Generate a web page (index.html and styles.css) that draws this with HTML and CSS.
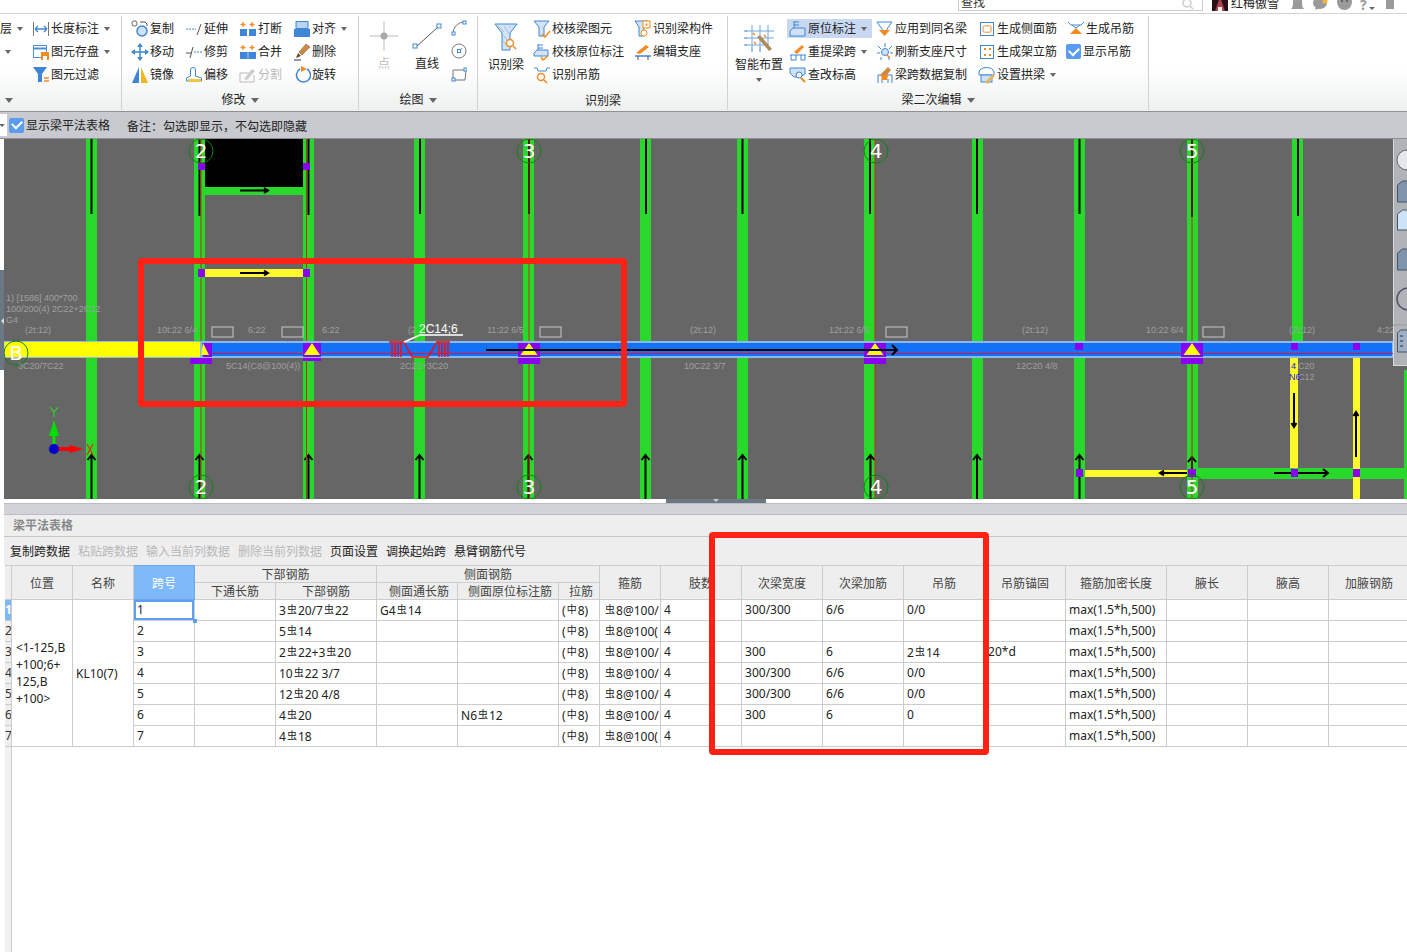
FILE: index.html
```html
<!DOCTYPE html>
<html lang="zh-CN">
<head>
<meta charset="utf-8">
<title>梁平法表格</title>
<link rel="stylesheet" href="styles.css">
</head>
<body>
<div class="app">

  <header class="topbar">
    <div class="search"><span>查找</span>
      <svg class="search-ic" viewBox="0 0 12 12"><circle cx="5" cy="5" r="4" fill="none" stroke="#ccc" stroke-width="1.5"/><path d="M8 8l3 3" stroke="#ccc" stroke-width="1.5"/></svg>
    </div>
    <svg class="avatar" viewBox="0 0 16 16"><rect width="16" height="16" fill="#2a1014"/><path d="M3 16L8 2l5 14z" fill="#a8434f"/><path d="M6 12h4v4H6z" fill="#eee"/></svg>
    <span class="user">红梅傲雪</span>
    <svg class="top-ic t-bell" viewBox="0 0 13 16"><path d="M0 15c2-2 2-4 2-8s2-7 4.500-7 4.500 3 4.500 7 0 6 2 8z" fill="#9a9a9a"/></svg>
    <svg class="top-ic t-chat" viewBox="0 0 15 16"><ellipse cx="7" cy="9" rx="7" ry="6" fill="#9a9a9a"/><path d="M3 13l-1 3 5-2z" fill="#9a9a9a"/><circle cx="12" cy="7" r="2.500" fill="#f5b53a"/></svg>
    <svg class="top-ic t-mask" viewBox="0 0 15 16"><ellipse cx="7.500" cy="8" rx="7.500" ry="8" fill="#9a9a9a"/><circle cx="5" cy="7" r="1.200" fill="#666"/><circle cx="10" cy="7" r="1.200" fill="#666"/></svg>
    <span class="help">?<i class="caret caret-s"></i></span>
    <svg class="top-ic t-shirt" viewBox="0 0 14 16"><path d="M0 2l4-2h6l4 2v4h-3v9H3V6H0z" fill="#9a9a9a"/></svg>
  </header>

  <section class="ribbon">
    <div class="group g0">
      <div class="g-body">
        <div class="g0-left">
          <div class="tool"><span>层</span><i class="caret g0-caret"></i></div>
          <div class="tool"><i class="caret g0-solo"></i></div>
        </div>
        <div class="stack">
          <div class="tool"><svg class="ic" viewBox="0 0 18 18"><path d="M1.500 2v14M16.500 2v14" stroke="#777"/><path d="M3 9h12M3 9l3-3M3 9l3 3M15 9l-3-3M15 9l-3 3" stroke="#3f86d6" stroke-width="1.3" fill="none"/></svg><span>长度标注</span><i class="caret"></i></div>
          <div class="tool"><svg class="ic" viewBox="0 0 18 18"><rect x="1.500" y="2.500" width="13" height="12" fill="#fff" stroke="#4a90d9"/><path d="M1.500 5.500h13" stroke="#4a90d9" stroke-width="2"/><rect x="9" y="9" width="8" height="8" fill="#f58a1f"/><rect x="11" y="13" width="4" height="4" fill="#fff"/></svg><span>图元存盘</span><i class="caret"></i></div>
          <div class="tool"><svg class="ic" viewBox="0 0 18 18"><path d="M1 1h14L10 8v8H6V8z" fill="#3f86d6"/><path d="M12 12h5M12 15h5" stroke="#f58a1f" stroke-width="1.4"/></svg><span>图元过滤</span></div>
        </div>
      </div>
      <div class="g-label g0-label"><i class="caret big-caret"></i></div>
    </div>

    <div class="group g1">
      <div class="g-body g1-grid">
        <div class="tool"><svg class="ic" viewBox="0 0 18 18"><rect x="1" y="1" width="5" height="5" rx="2" fill="none" stroke="#666"/><circle cx="11" cy="11" r="5" fill="#cfe2f5" stroke="#3f86d6" stroke-width="1.5"/><path d="M9 2h5l2 2v2" fill="none" stroke="#555"/></svg><span>复制</span></div>
        <div class="tool"><svg class="ic" viewBox="0 0 18 18"><path d="M1 9h10" stroke="#3f86d6" stroke-dasharray="2 1"/><path d="M12 15l4-11" stroke="#555"/></svg><span>延伸</span></div>
        <div class="tool"><svg class="ic" viewBox="0 0 18 18"><path d="M4 2v5M1.500 4.500h5M13 2v5M10.500 4.500h5" stroke="#f58a1f" stroke-width="1.300"/><rect x="1" y="9" width="7" height="7" fill="#3f86d6"/><rect x="10" y="9" width="7" height="7" fill="#3f86d6"/></svg><span>打断</span></div>
        <div class="tool"><svg class="ic" viewBox="0 0 18 18"><rect x="3" y="1.500" width="12" height="7" fill="#b9d3f0" stroke="#3f86d6"/><rect x="1" y="9" width="16" height="8" fill="#3f86d6"/></svg><span>对齐</span><i class="caret"></i></div>

        <div class="tool"><svg class="ic" viewBox="0 0 18 18"><path d="M9 3v12M3 9h12" stroke="#3f86d6" stroke-width="1.500"/><path d="M9 0l3 4H6zM9 18l3-4H6zM0 9l4-3v6zM18 9l-4-3v6z" fill="#3f86d6"/></svg><span>移动</span></div>
        <div class="tool"><svg class="ic" viewBox="0 0 18 18"><path d="M1 10h5" stroke="#555"/><path d="M9 9h8" stroke="#3f86d6" stroke-dasharray="2 1"/><path d="M5 15l3-11" stroke="#555"/></svg><span>修剪</span></div>
        <div class="tool"><svg class="ic" viewBox="0 0 18 18"><path d="M4 2v5M1.500 4.500h5M13 2v5M10.500 4.500h5" stroke="#f58a1f" stroke-width="1.300"/><rect x="1" y="9" width="16" height="7" fill="#3f86d6"/><path d="M9 9v7" stroke="#a9cdf2"/></svg><span>合并</span></div>
        <div class="tool"><svg class="ic" viewBox="0 0 18 18"><path d="M1 17h7" stroke="#333"/><path d="M3 15l2-5 3 3z" fill="#6b4a2a"/><path d="M6 9l7-8 4 3-8 8z" fill="#c88a45" stroke="#7a5230" stroke-width=".5"/></svg><span>删除</span></div>

        <div class="tool"><svg class="ic" viewBox="0 0 18 18"><path d="M8 1v16H1z" fill="#3f86d6"/><path d="M10 1v16h7z" fill="#f5b51f"/></svg><span>镜像</span></div>
        <div class="tool"><svg class="ic" viewBox="0 0 18 18"><path d="M1.500 15v-3l4-2V4a2.500 2.500 0 015 0v6l6 2v3z" fill="#fff" stroke="#3f86d6"/><path d="M3 13h13v3H3z" fill="#f5c34a"/></svg><span>偏移</span></div>
        <div class="tool off"><svg class="ic" viewBox="0 0 18 18"><path d="M1 7h11M1 7v9h14V9" fill="none" stroke="#bbb"/><path d="M5 13l8-10 3 2-8 9z" fill="#ccc"/></svg><span>分割</span></div>
        <div class="tool"><svg class="ic" viewBox="0 0 18 18"><path d="M7 3a7 7 0 107-0" fill="none" stroke="#3f86d6" stroke-width="1.500"/><path d="M8 0l6 3-6 3z" fill="#f58a1f"/></svg><span>旋转</span></div>
      </div>
      <div class="g-label">修改<i class="caret big-caret"></i></div>
    </div>

    <div class="group g2">
      <div class="g-body g2-row">
        <div class="big pt off">
          <svg class="ic-pt" viewBox="0 0 28 30"><path d="M14 0v30M0 15h28" stroke="#bbb"/><circle cx="14" cy="15" r="3.500" fill="#aaa"/></svg>
          <span>点</span>
        </div>
        <div class="big ln">
          <svg class="ic-ln" viewBox="0 0 30 28"><path d="M4 24L26 4" stroke="#555"/><rect x="1" y="21" width="4" height="4" fill="#fff" stroke="#3f86d6"/><rect x="25" y="1" width="4" height="4" fill="#fff" stroke="#3f86d6"/></svg>
          <span>直线</span>
        </div>
        <div class="mini-col">
          <svg class="ic-mini" viewBox="0 0 16 16"><path d="M2 14C2 7 7 2 14 2" fill="none" stroke="#777"/><rect x="1" y="12" width="3" height="3" fill="#fff" stroke="#3f86d6"/><rect x="12" y="1" width="3" height="3" fill="#fff" stroke="#3f86d6"/></svg>
          <svg class="ic-mini" viewBox="0 0 16 16"><circle cx="8" cy="8" r="7" fill="none" stroke="#777"/><path d="M8 8l3-3" stroke="#777"/><rect x="6.500" y="6.500" width="3" height="3" fill="#fff" stroke="#3f86d6"/></svg>
          <svg class="ic-mini" viewBox="0 0 16 16"><path d="M2 4h13l-1 10H2z" fill="none" stroke="#777"/><rect x="13" y="2" width="3" height="3" fill="#fff" stroke="#3f86d6"/><rect x="1" y="12" width="3" height="3" fill="#fff" stroke="#3f86d6"/></svg>
        </div>
      </div>
      <div class="g-label">绘图<i class="caret big-caret"></i></div>
    </div>

    <div class="group g3">
      <div class="g-body g3-row">
        <div class="big rec">
          <svg class="ic-rec" viewBox="0 0 24 28"><path d="M1 1h22L16 10v17H8V10z" fill="#d5e4f5" stroke="#3f86d6"/><path d="M4 3l6 6M10 3l5 8M15 3l1 2M9 12l6 7M9 18l5 6" stroke="#9cc0e8"/><circle cx="16" cy="20" r="3.500" fill="#fff" stroke="#f58a1f" stroke-width="1.400"/><path d="M19 23l3 3" stroke="#f58a1f" stroke-width="1.500"/></svg>
          <span>识别梁</span>
        </div>
        <div class="stack s-a">
          <div class="tool"><svg class="ic" viewBox="0 0 18 18"><path d="M1 1h15l-5 6v9H6V7z" fill="#d5e4f5" stroke="#3f86d6"/><path d="M9 14l3 3 5-6" fill="none" stroke="#f58a1f" stroke-width="1.500"/></svg><span>校核梁图元</span></div>
          <div class="tool"><svg class="ic" viewBox="0 0 18 18"><path d="M5 1v7M5 2h5M5 5h5" stroke="#3f86d6"/><path d="M1 10l3-3h11v6H1z" fill="#d5e4f5" stroke="#3f86d6"/><path d="M8 14l2 3 5-4" fill="none" stroke="#f58a1f" stroke-width="1.500"/></svg><span>校核原位标注</span></div>
          <div class="tool"><svg class="ic" viewBox="0 0 18 18"><path d="M1 2h3l1 3h8l1-3h3" fill="none" stroke="#3f86d6"/><circle cx="8" cy="11" r="3.500" fill="#fff" stroke="#f58a1f" stroke-width="1.400"/><path d="M11 14l3 3" stroke="#f58a1f" stroke-width="1.500"/></svg><span>识别吊筋</span></div>
        </div>
        <div class="stack s-b">
          <div class="tool"><svg class="ic" viewBox="0 0 18 18"><path d="M1 1h13l-4 6v9H5V7z" fill="#d5e4f5" stroke="#3f86d6"/><rect x="9" y="1" width="7" height="7" fill="#fff" stroke="#f58a1f"/><rect x="11.500" y="3.500" width="2" height="2" fill="#f58a1f"/><circle cx="10" cy="13" r="3" fill="#fff" stroke="#f58a1f"/></svg><span>识别梁构件</span></div>
          <div class="tool"><svg class="ic" viewBox="0 0 18 18"><path d="M2 10l10-8 3 2-9 7z" fill="#f58a1f"/><path d="M1 13h16" stroke="#3f86d6" stroke-width="1.500"/><path d="M4 13v4M14 13v4" stroke="#555"/></svg><span>编辑支座</span></div>
        </div>
      </div>
      <div class="g-label">识别梁</div>
    </div>

    <div class="group g4">
      <div class="g-body g4-row">
        <div class="big smart">
          <svg class="ic-smart" viewBox="0 0 32 34"><path d="M9 1v22M17 1v22M25 1v22M3 7h28M3 14h28M3 21h20" stroke="#6ea6e0"/><path d="M1 7h3M1 14h3M1 21h3M9 23v5M17 23v5" stroke="#3f86d6"/><path d="M14 13l12 14 3-2-12-14z" fill="#b08a5a"/><path d="M10 9l2 2M21 11l2 2M11 18l2 2" stroke="#f58a1f" stroke-width="1.500"/></svg>
          <span>智能布置</span>
          <i class="caret smart-caret"></i>
        </div>
        <div class="stack s-c">
          <div class="tool on"><svg class="ic" viewBox="0 0 18 18"><path d="M5 1v7M5 2h5M5 5h5" stroke="#3f86d6"/><path d="M1 11l3-3h12v8H1z" fill="#cfe2f5" stroke="#3f86d6"/></svg><span>原位标注</span><i class="caret"></i></div>
          <div class="tool"><svg class="ic" viewBox="0 0 18 18"><path d="M5 9l8-7 2 2-7 7z" fill="#f58a1f"/><path d="M1 12h16M2 12v5M7 12v5M12 12v5M16 12v5M2 17h5M12 17h4" stroke="#3f86d6" fill="none"/></svg><span>重提梁跨</span><i class="caret"></i></div>
          <div class="tool"><svg class="ic" viewBox="0 0 18 18"><path d="M1 2h15v6l-5 3H5L1 7z" fill="#cfe2f5" stroke="#3f86d6"/><circle cx="10" cy="9" r="3" fill="#fff" stroke="#3f86d6"/><path d="M12 12l4 4" stroke="#f58a1f" stroke-width="2"/></svg><span>查改标高</span></div>
        </div>
        <div class="stack s-d">
          <div class="tool"><svg class="ic" viewBox="0 0 18 18"><path d="M1 2h15l-5 7v3H6V9z" fill="#fff" stroke="#3f86d6"/><path d="M3 10h11l-5.500 6z" fill="#f58a1f"/></svg><span>应用到同名梁</span></div>
          <div class="tool"><svg class="ic" viewBox="0 0 18 18"><path d="M9 0v4M2 3l3 3M16 3l-3 3M1 10h3M14 10h3M5 17v-3M13 17v-3" stroke="#3f86d6"/><circle cx="9" cy="9" r="3.500" fill="#cfe2f5" stroke="#3f86d6"/><path d="M11 12l3 3" stroke="#f58a1f" stroke-width="1.500"/></svg><span>刷新支座尺寸</span></div>
          <div class="tool"><svg class="ic" viewBox="0 0 18 18"><path d="M2 17V9h14v8M6 17v-4M12 17v-4" fill="none" stroke="#3f86d6"/><path d="M4 9l8-8 3 3-5 6z" fill="#c88a45"/><path d="M5 9h7l-1 5H6z" fill="#f58a1f"/></svg><span>梁跨数据复制</span></div>
        </div>
        <div class="stack s-e">
          <div class="tool"><svg class="ic" viewBox="0 0 18 18"><rect x="2.500" y="2.500" width="13" height="13" fill="#fff" stroke="#3f86d6"/><path d="M5 6.500c0-1 8-1 8 0M5 11.500c0 1 8 1 8 0M5 6.500v5M13 6.500v5" fill="none" stroke="#f58a1f"/></svg><span>生成侧面筋</span></div>
          <div class="tool"><svg class="ic" viewBox="0 0 18 18"><rect x="2.500" y="2.500" width="13" height="13" fill="#fff" stroke="#3f86d6"/><path d="M6 5h2v2H6zM11 5h2v2h-2zM6 11h2v2H6zM11 11h2v2h-2z" fill="#f58a1f"/></svg><span>生成架立筋</span></div>
          <div class="tool"><svg class="ic" viewBox="0 0 18 18"><path d="M1 6c1-6 14-6 15 0v3H1z" fill="#fff" stroke="#3f86d6"/><rect x="3" y="9" width="11" height="7" fill="#cfe2f5" stroke="#3f86d6"/><path d="M7 16l8-8 2 2-8 8z" fill="#e8b45a"/></svg><span>设置拱梁</span><i class="caret"></i></div>
        </div>
        <div class="stack s-f">
          <div class="tool"><svg class="ic" viewBox="0 0 18 18"><path d="M1 2l3 3h10l3-3" fill="none" stroke="#3f86d6"/><path d="M3 14L9 8l6 6z" fill="#f58a1f"/><path d="M5 5l4 3 4-3" fill="none" stroke="#3f86d6"/></svg><span>生成吊筋</span></div>
          <label class="tool chk"><span class="check"></span><span>显示吊筋</span></label>
        </div>
      </div>
      <div class="g-label">梁二次编辑<i class="caret big-caret"></i></div>
    </div>
  </section>

  <section class="optbar">
    <span class="drop"><i class="caret caret-s"></i></span>
    <span class="check"></span>
    <span class="opt-t">显示梁平法表格</span>
    <span class="opt-n">备注：勾选即显示，不勾选即隐藏</span>
  </section>

  <section class="view">
    <div class="gutter"><div class="handle"><i></i></div></div>
    <div class="canvas">
      <svg class="cad" viewBox="4 139 1403 360">
        <g class="green">
          <rect x="86" y="139" width="11" height="360"/><rect x="194" y="139" width="11" height="360"/>
          <rect x="303" y="139" width="11" height="360"/><rect x="414" y="139" width="11" height="360"/>
          <rect x="523" y="139" width="11" height="360"/><rect x="640" y="139" width="11" height="360"/>
          <rect x="737" y="139" width="11" height="360"/><rect x="864" y="139" width="11" height="360"/>
          <rect x="972" y="139" width="11" height="360"/><rect x="1074" y="139" width="11" height="360"/>
          <rect x="1187" y="139" width="11" height="360"/><rect x="1292" y="139" width="11" height="203"/>
          <rect x="1404" y="370" width="3" height="129"/>
          <rect x="205" y="187" width="98" height="8"/><rect x="1198" y="468" width="209" height="11"/>
        </g>
        <rect x="205" y="139" width="98" height="48" fill="#000"/>
        <g class="yellow">
          <rect x="205" y="269" width="98" height="8"/><rect x="1290" y="358" width="8" height="110"/>
          <rect x="1353" y="358" width="7" height="141"/><rect x="1085" y="470" width="102" height="7"/>
        </g>
        <g class="blk">
          <path d="M91.500 139v75M199.500 139v77M308.500 139v76M420 139v75M529 139v75M646 139v75M742.500 139v75M870 139v75M977 139v75M1079.500 139v75M1192 139v78M1298 139v77"/>
          <path d="M91.500 499v-44M87.500 460l4-5 4 5M199.500 499v-44M195.500 460l4-5 4 5M308.500 499v-44M304.500 460l4-5 4 5M419.500 499v-44M415.500 460l4-5 4 5M528.500 499v-44M524.500 460l4-5 4 5M645.500 499v-44M641.500 460l4-5 4 5M742.500 499v-44M738.500 460l4-5 4 5M870.500 499v-44M866.500 460l4-5 4 5M977 499v-44M973 460l4-5 4 5M1079.500 499v-44M1075.500 460l4-5 4 5M1192 469v-12M1188 462l4-5 4 5"/>
          <path d="M240 190.500h27M264 188l4 2.500-4 2.500M240 273h27M264 270.500l4 2.500-4 2.500"/>
          <path d="M1160 473h27M1164 470.500l-4 2.500 4 2.500M1274 473h53M1323 469l5 4-5 4M1294 393v33M1291.500 423l2.500 4 2.500-4M1356 457v-44M1353.500 416l2.500-4 2.500 4"/>
        </g>
        <path class="rd" d="M201 139v360M306.500 139v360M529 139v360M875 139v360M1192 139v360"/>
        <g class="purple">
          <rect x="198" y="163" width="7" height="7"/><rect x="303" y="163" width="7" height="7"/>
          <rect x="198" y="269" width="7" height="8"/><rect x="303" y="269" width="7" height="8"/>
          <rect x="1076" y="469" width="7" height="8"/><rect x="1188" y="469" width="8" height="8"/>
          <rect x="1291" y="469" width="7" height="8"/><rect x="1353" y="469" width="7" height="8"/>
        </g>
        <rect class="beam-y" x="4" y="341.500" width="200" height="16"/>
        <rect class="beam-b" x="201" y="342" width="1192" height="15"/>
        <path class="beam-r" d="M201 353.500h1192"/>
        <g class="purple">
          <rect x="203" y="343" width="9" height="14"/><rect x="190" y="358" width="22" height="6"/>
          <rect x="303" y="343" width="18" height="14"/><rect x="303" y="358" width="18" height="3"/>
          <rect x="518" y="343" width="22" height="14"/><rect x="518" y="358" width="22" height="6"/>
          <rect x="864" y="343" width="22" height="14"/><rect x="864" y="358" width="22" height="6"/>
          <rect x="1181" y="343" width="22" height="14"/><rect x="1181" y="358" width="22" height="6"/>
          <rect x="1075" y="343" width="8" height="7"/><rect x="1291" y="343" width="7" height="7"/><rect x="1353" y="343" width="7" height="7"/>
        </g>
        <g class="tri">
          <path d="M203 343l6 12h-8z"/><path d="M312 343l8 12h-16z"/><path d="M529 343l8.500 12h-17z"/>
          <path d="M875 343l8.500 12h-17z"/><path d="M1192 343l8.500 12h-17z"/>
        </g>
        <path class="long" d="M486 350h411M892 345l5 5-5 5"/>
        <path class="hanger" d="M389 342h15l8 15h16l9-15h13M392 342v15M395 342v15M398 342v15M401 342v15M439 342v15M442 342v15M445 342v15M448 342v15"/>
        <path class="call" d="M404 342l16-7h43"/>
        <text class="callout" x="419" y="333">2C14;6</text>
        <g class="box">
          <rect x="212" y="327" width="21" height="10"/><rect x="282" y="327" width="21" height="10"/>
          <rect x="540" y="327" width="21" height="10"/><rect x="886" y="327" width="21" height="10"/>
          <rect x="1203" y="327" width="21" height="10"/>
        </g>
        <g class="lbl">
          <text x="6" y="301">1) [1586] 400*700</text><text x="6" y="312">100/200(4) 2C22+2C12</text><text x="6" y="323">G4</text>
          <text x="25" y="333">(2t:12)</text><text x="157" y="333">10t:22 6/4</text><text x="248" y="333">6:22</text>
          <text x="322" y="333">6:22</text><text x="408" y="333">(2</text><text x="487" y="333">11:22 6/5</text>
          <text x="690" y="333">(2t:12)</text><text x="829" y="333">12t:22 6/6</text><text x="1022" y="333">(2t:12)</text>
          <text x="1146" y="333">10:22 6/4</text><text x="1289" y="333">(2t:12)</text><text x="1377" y="333">4:22</text>
          <text x="18" y="369">3C20/7C22</text><text x="226" y="369">5C14(C8@100(4))</text><text x="400" y="369">2C22+3C20</text>
          <text x="684" y="369">10C22 3/7</text><text x="1016" y="369">12C20 4/8</text>
          <text x="1298" y="369">C20</text><text x="1298" y="380">C12</text>
        </g>
        <g class="lbl-blue"><text x="1291" y="369">4</text><text x="1289" y="380">N6</text></g>
        <g class="axis">
          <circle cx="201" cy="151" r="12"/><circle cx="529" cy="151" r="12"/><circle cx="876" cy="151" r="12"/><circle cx="1192" cy="151" r="12"/>
          <circle cx="201" cy="487" r="12"/><circle cx="529" cy="487" r="12"/><circle cx="876" cy="487" r="12"/><circle cx="1192" cy="487" r="12"/>
          <circle cx="16" cy="353" r="12"/>
        </g>
        <g class="axis-t">
          <text x="201" y="158">2</text><text x="529" y="158">3</text><text x="876" y="158">4</text><text x="1192" y="158">5</text>
          <text x="201" y="494">2</text><text x="529" y="494">3</text><text x="876" y="494">4</text><text x="1192" y="494">5</text>
          <text x="16" y="360">B</text>
        </g>
        <path class="ax-g" d="M54 449v-14"/><path class="ax-gf" d="M54 420l5 16H49z"/>
        <path class="ax-r" d="M54 449h18"/><path class="ax-rf" d="M83 449l-13-4v8z"/>
        <circle class="ax-o" cx="54" cy="449" r="5"/>
        <path class="ax-yl" d="M50 407l4 5 4-5M54 412v5"/>
        <path class="ax-xl" d="M87 444l6 11M93 444l-6 11"/>
      </svg>
      <aside class="side">
        <svg class="side-ic" viewBox="0 0 14 227">
          <path d="M0 186h14" stroke="#999"/>
          <circle cx="14" cy="21" r="10" fill="#e4e8ec" stroke="#667"/>
          <path d="M4.500 46l5-4h5v21h-10z" fill="#7f93ab" stroke="#456"/>
          <path d="M4.500 75l5-4h5v20h-10z" fill="#cfe3f7" stroke="#456"/>
          <path d="M4.500 114l5-4h5v21h-10z" fill="#7f93ab" stroke="#456"/>
          <circle cx="15" cy="160" r="11" fill="none" stroke="#556" stroke-width="1.500"/>
          <path d="M4.500 194l3-3h7v22h-10z" fill="#9fb0c4" stroke="#456"/>
          <path d="M7 197h3M7 202h3M7 207h3" stroke="#234"/>
        </svg>
      </aside>
    </div>
  </section>

  <div class="gap"><div class="gap-handle"><i></i></div></div>

  <section class="panel">
    <div class="splitter"></div>
    <div class="p-title">梁平法表格</div>
    <div class="p-tools">
      <span>复制跨数据</span><span class="dis">粘贴跨数据</span><span class="dis">输入当前列数据</span><span class="dis">删除当前列数据</span><span>页面设置</span><span>调换起始跨</span><span>悬臂钢筋代号</span>
    </div>
    <div class="grid-wrap">
      <table class="sheet">
        <colgroup>
          <col class="w7"><col class="w61"><col class="w61"><col class="w61"><col class="w81"><col class="w101"><col class="w81"><col class="w101"><col class="w41"><col class="w61"><col class="w81"><col class="w81"><col class="w81"><col class="w81"><col class="w81"><col class="w101"><col class="w81"><col class="w81"><col class="w81">
        </colgroup>
        <thead>
          <tr class="h1">
            <th rowspan="2"></th><th rowspan="2">位置</th><th rowspan="2">名称</th><th rowspan="2" class="cur">跨号</th>
            <th colspan="2">下部钢筋</th><th colspan="3">侧面钢筋</th>
            <th rowspan="2">箍筋</th><th rowspan="2">肢数</th><th rowspan="2">次梁宽度</th><th rowspan="2">次梁加筋</th><th rowspan="2">吊筋</th><th rowspan="2">吊筋锚固</th><th rowspan="2">箍筋加密长度</th><th rowspan="2">腋长</th><th rowspan="2">腋高</th><th rowspan="2">加腋钢筋</th>
          </tr>
          <tr class="h2"><th>下通长筋</th><th>下部钢筋</th><th class="sub">侧面通长筋</th><th class="sub">侧面原位标注筋</th><th class="sub">拉筋</th></tr>
        </thead>
        <tbody>
          <tr>
            <td class="num sel-n">1</td><td rowspan="7" class="pos">&lt;1-125,B<br>+100;6+<br>125,B<br>+100&gt;</td><td rowspan="7" class="name">KL10(7)</td>
            <td class="sel">1<i class="grip"></i></td><td></td><td>3<i class="r">虫</i>20/7<i class="r">虫</i>22</td><td>G4<i class="r">虫</i>14</td><td></td><td>(<i class="r">中</i>8)</td><td class="st"><i class="r">虫</i>8@100/</td><td>4</td><td>300/300</td><td>6/6</td><td>0/0</td><td></td><td>max(1.5*h,500)</td><td></td><td></td><td></td>
          </tr>
          <tr>
            <td class="num">2</td><td>2</td><td></td><td>5<i class="r">虫</i>14</td><td></td><td></td><td>(<i class="r">中</i>8)</td><td class="st"><i class="r">虫</i>8@100(</td><td>4</td><td></td><td></td><td></td><td></td><td>max(1.5*h,500)</td><td></td><td></td><td></td>
          </tr>
          <tr>
            <td class="num">3</td><td>3</td><td></td><td>2<i class="r">虫</i>22+3<i class="r">虫</i>20</td><td></td><td></td><td>(<i class="r">中</i>8)</td><td class="st"><i class="r">虫</i>8@100/</td><td>4</td><td>300</td><td>6</td><td>2<i class="r">虫</i>14</td><td>20*d</td><td>max(1.5*h,500)</td><td></td><td></td><td></td>
          </tr>
          <tr>
            <td class="num">4</td><td>4</td><td></td><td>10<i class="r">虫</i>22 3/7</td><td></td><td></td><td>(<i class="r">中</i>8)</td><td class="st"><i class="r">虫</i>8@100/</td><td>4</td><td>300/300</td><td>6/6</td><td>0/0</td><td></td><td>max(1.5*h,500)</td><td></td><td></td><td></td>
          </tr>
          <tr>
            <td class="num">5</td><td>5</td><td></td><td>12<i class="r">虫</i>20 4/8</td><td></td><td></td><td>(<i class="r">中</i>8)</td><td class="st"><i class="r">虫</i>8@100/</td><td>4</td><td>300/300</td><td>6/6</td><td>0/0</td><td></td><td>max(1.5*h,500)</td><td></td><td></td><td></td>
          </tr>
          <tr>
            <td class="num">6</td><td>6</td><td></td><td>4<i class="r">虫</i>20</td><td></td><td>N6<i class="r">虫</i>12</td><td>(<i class="r">中</i>8)</td><td class="st"><i class="r">虫</i>8@100/</td><td>4</td><td>300</td><td>6</td><td>0</td><td></td><td>max(1.5*h,500)</td><td></td><td></td><td></td>
          </tr>
          <tr>
            <td class="num">7</td><td>7</td><td></td><td>4<i class="r">虫</i>18</td><td></td><td></td><td>(<i class="r">中</i>8)</td><td class="st"><i class="r">虫</i>8@100(</td><td>4</td><td></td><td></td><td></td><td></td><td>max(1.5*h,500)</td><td></td><td></td><td></td>
          </tr>
        </tbody>
      </table>
    </div>
  </section>

  <div class="mark mark-a"></div>
  <div class="mark mark-b"></div>
</div>
</body>
</html>
```
FILE: styles.css
```css
* { box-sizing: border-box; }
html, body { margin: 0; padding: 0; background: #fff; }
body { font: 12px/14px "Noto Sans", "Noto Sans CJK SC", sans-serif; color: #222; overflow: hidden; }
.app { position: relative; width: 1407px; height: 952px; overflow: hidden; display: flex; flex-direction: column; }
i { font-style: normal; }

/* top strip */
.topbar { height: 14px; flex: none; border-bottom: 1px solid #d4d4d4; display: flex; align-items: flex-end; overflow: hidden; background: #fff; padding-left: 958px; }
.search { width: 245px; height: 20px; flex: none; border: 1px solid #ccc; margin-bottom: 2px; display: flex; align-items: flex-end; justify-content: space-between; padding: 0 8px 0 2px; color: #333; }
.search-ic { width: 12px; height: 12px; }
.avatar { width: 16px; height: 16px; flex: none; margin: 0 3px 2px 9px; }
.user { flex: none; margin-bottom: 2px; width: 48px; }
.top-ic { height: 16px; flex: none; margin-bottom: 3px; }
.t-bell { width: 13px; margin-left: 12px; }
.t-chat { width: 15px; margin-left: 9px; }
.t-mask { width: 15px; margin-left: 9px; }
.t-shirt { width: 14px; }
.help { flex: none; margin-left: 8px; margin-bottom: 1px; color: #9a9a9a; font-weight: 700; font-size: 14px; width: 23px; }

/* ribbon */
.ribbon { height: 97px; flex: none; display: flex; background: linear-gradient(#fff 0, #fff 55%, #eef0f0 100%); }
.group { display: flex; flex-direction: column; position: relative; border-right: 1px solid #cfd1d3; margin: 2px 0 1px; flex: none; }
.g0 { width: 122px; } .g1 { width: 237px; } .g2 { width: 119px; } .g3 { width: 250px; } .g4 { width: 421px; }
.g-body { height: 71px; padding-top: 1px; flex: none; }
.g-label { flex: 1; display: flex; align-items: center; justify-content: center; gap: 5px; padding-top: 3px; }
.g3 .g-label { padding: 5px 0 0 1px; }
.g0-label { justify-content: flex-start; padding-left: 5px; }
.tool { height: 23px; display: flex; align-items: center; white-space: nowrap; flex: none; }
.tool.off, .big.off { color: #bbb; }
.ic { width: 18px; height: 18px; flex: none; margin-right: 1px; display: block; }
.caret { display: inline-block; width: 0; height: 0; border: 4px solid transparent; border-bottom-width: 0; border-top: 4px solid #666; border-left-width: 3.500px; border-right-width: 3.500px; margin-left: 5px; flex: none; }
.big-caret { border-left-width: 4px; border-right-width: 4px; border-top-width: 5px; margin-left: 0; }
.caret-s { border-width: 3px 3px 0; margin-left: 2px; }

.g0 .g-body { display: flex; }
.g0-left { width: 32px; flex: none; }
.g0-caret { margin-left: 5px; }
.g0-solo { margin-left: 5px; }
.stack { display: flex; flex-direction: column; flex: none; }
.g1-grid { display: grid; grid-template-columns: 54px 54px 54px 1fr; grid-auto-rows: 23px; padding-left: 9px; }
.g2-row, .g3-row, .g4-row { display: flex; }
.big { display: flex; flex-direction: column; align-items: center; flex: none; }
.big span { display: block; }
.pt { width: 28px; margin-left: 11px; padding-top: 4px; }
.ic-pt { width: 28px; height: 30px; display: block; margin-bottom: 6px; }
.ln { width: 36px; margin-left: 11px; padding-top: 6px; }
.ic-ln { width: 30px; height: 28px; display: block; margin-bottom: 6px; }
.mini-col { display: flex; flex-direction: column; margin-left: 6px; padding-top: 3px; gap: 7px; }
.ic-mini { width: 16px; height: 16px; display: block; }

.rec { width: 36px; margin-left: 10px; padding-top: 6px; }
.ic-rec { width: 24px; height: 28px; display: block; margin-bottom: 7px; }
.s-a { width: 101px; margin-left: 9px; }
.s-b { width: 90px; }

.smart { width: 48px; margin-left: 7px; padding-top: 7px; }
.ic-smart { width: 32px; height: 34px; display: block; margin-bottom: 0; }
.smart-caret { margin: 6px 0 0; }
.s-c { width: 89px; margin-left: 4px; }
.s-c .tool { padding-left: 2px; }
.s-c .tool.on { background: #c7d8f0; width: 85px; height: 19px; margin: 2px 0 2px; padding-left: 2px; }
.s-d { width: 102px; }
.s-e { width: 89px; }
.chk { padding-left: 0; margin-left: -1px; }
.check { width: 15px; height: 15px; background: #5a9cf0; border-radius: 2px; flex: none; position: relative; display: block; }
.check::after { content: ""; position: absolute; left: 3px; top: 2.500px; width: 8px; height: 5px; border-left: 2px solid #fff; border-bottom: 2px solid #fff; transform: rotate(-45deg); }
.chk .check { margin-right: 2px; }

/* option bar */
.optbar { height: 28px; flex: none; background: #c8cacf; border-top: 1px solid #8f9092; border-bottom: 1px solid #8f9092; display: flex; align-items: center; }
.drop { width: 7px; height: 22px; background: #fff; display: flex; align-items: center; flex: none; margin-right: 2px; overflow: hidden; }
.drop .caret { margin-left: -1px; }
.opt-t { margin-left: 2px; width: 84px; flex: none; padding-top: 2px; }
.opt-n { margin-left: 17px; padding-top: 2px; font-family: "Noto Sans CJK TC", sans-serif; }

/* drawing */
.view { height: 360px; flex: none; display: flex; }
.gutter { width: 4px; flex: none; position: relative; background: #fff; }
.handle { position: absolute; left: 0; top: 131px; width: 4px; height: 100px; background: #6b7785; }
.handle i { position: absolute; top: 48px; left: 1px; border: 3px solid transparent; border-left-width: 0; border-right: 3px solid #ddd; }
.canvas { flex: 1; position: relative; background: #666; overflow: hidden; }
.cad { width: 1403px; height: 360px; display: block; }
.green rect { fill: #28d82a; }
.yellow rect { fill: #fdf92a; }
.purple rect { fill: #8a00f0; }
.tri path { fill: #ffff00; }
.blk path { fill: none; stroke: #000; stroke-width: 2; }
.rd { fill: none; stroke: #c8281e; stroke-width: 1; }
.beam-y { fill: #ffff00; stroke: #9ab8e8; stroke-width: 1; }
.beam-b { fill: #1470f5; stroke: #8ab8f2; stroke-width: 2; }
.beam-r { stroke: #d01848; stroke-width: 1; fill: none; }
.long { fill: none; stroke: #000; stroke-width: 2; }
.hanger { fill: none; stroke: #f01010; stroke-width: 1.500; }
.call { fill: none; stroke: #fff; stroke-width: 1.500; }
.callout { fill: #fff; font: 12px "Liberation Sans", sans-serif; }
.box rect { fill: none; stroke: #c8c8c8; stroke-width: 1; }
.lbl text { fill: #a0a0a0; font: 9px "Liberation Sans", sans-serif; }
.lbl-blue text { fill: #1a1ae0; font: 9px "Liberation Sans", sans-serif; }
.axis circle { fill: none; stroke: #0a860a; stroke-width: 1; }
.axis-t text { fill: #fff; font: 20px "DejaVu Sans", sans-serif; text-anchor: middle; }
.ax-g { stroke: #00e000; stroke-width: 3; }
.ax-gf { fill: #00e000; }
.ax-r { stroke: #f00; stroke-width: 4; }
.ax-rf { fill: #f00; }
.ax-o { fill: #0000c8; }
.ax-yl { fill: none; stroke: #28d82a; stroke-width: 1.200; }
.ax-xl { fill: none; stroke: #f02020; stroke-width: 1.200; }
.side { position: absolute; right: 0; top: 0; width: 14px; height: 227px; background: #b0b4b8; border-left: 1px solid #d8dade; border-bottom: 1px solid #d8dade; }
.side-ic { width: 14px; height: 227px; display: block; margin-left: -1px; }

.gap { height: 4px; flex: none; position: relative; background: #fff; }
.gap-handle { position: absolute; left: 666px; top: 0; width: 100px; height: 4px; background: #6b7785; }
.gap-handle i { position: absolute; left: 47px; top: 0; border: 3px solid transparent; border-bottom-width: 0; border-top: 3px solid #ccc; }

/* table panel */
.panel { flex: 1; margin-left: 4px; display: flex; flex-direction: column; min-height: 0; }
.splitter { height: 12px; flex: none; background: #d2d3d8; border-top: 1px solid #bbbcc0; border-bottom: 1px solid #bbbcc0; }
.p-title { height: 22px; flex: none; background: #eee; border-bottom: 1px solid #c6c7ca; padding-left: 9px; font-weight: 700; color: #888; line-height: 22px; }
.p-tools { height: 28px; flex: none; background: #eee; display: flex; align-items: center; gap: 8px; padding: 2px 0 0 6px; color: #222; }
.dis { color: #b8b8b8; }
.grid-wrap { flex: 1; overflow: hidden; padding-left: 1px; background: linear-gradient(90deg, #fff 1px, #f0f0f0 1px, #f0f0f0 7px, #ccc 7px, #ccc 8px, #fff 8px); }
.sheet { border-collapse: separate; border-spacing: 0; table-layout: fixed; width: 1405px; }
.w7 { width: 7px; } .w41 { width: 41px; } .w61 { width: 61px; } .w81 { width: 81px; } .w101 { width: 101px; }
.sheet th, .sheet td { border-right: 1px solid #ccc; border-bottom: 1px solid #ccc; padding: 0; overflow: hidden; white-space: nowrap; }
.sheet th { background: #eee; font-weight: 400; color: #444; text-align: center; padding-top: 2px; }
.h1 th { height: 18px; border-top: 1px solid #ccc; }
.h1 th[rowspan] { padding-top: 3px; }
.h2 th { height: 17px; padding-top: 1px; }
.sheet th.sub { padding-left: 4px; }
.sheet th.cur { background: #7db8f9; color: #fff; border-color: #6aa8ee; }
.sheet td { height: 21px; padding-left: 3px; background: #fff; }
.sheet td.num { background: #eee; padding-left: 0; color: #333; }
.sheet td.sel-n { background: #7db8f9; color: #fff; font-weight: 700; }
.sheet td.pos { white-space: normal; line-height: 17px; padding: 0 0 0 4px; }
.sheet td.name { padding-top: 2px; }
.sheet td.st { padding-left: 4px; }
.sheet td.sel { position: relative; overflow: visible; box-shadow: inset 0 0 0 2px #5a9ff0; }
.grip { position: absolute; right: -3px; bottom: -3px; width: 4px; height: 4px; background: #5a9ff0; }
.r { font-size: 10px; vertical-align: 2px; margin: 0 1px; font-family: "Noto Sans CJK SC", sans-serif; }

/* hand-drawn red marks over the screenshot */
.mark { position: absolute; border: 6px solid #ff2214; border-radius: 4px; pointer-events: none; }
.mark-a { left: 138px; top: 258px; width: 489px; height: 149px; }
.mark-b { left: 709px; top: 532px; width: 280px; height: 223px; }
```
